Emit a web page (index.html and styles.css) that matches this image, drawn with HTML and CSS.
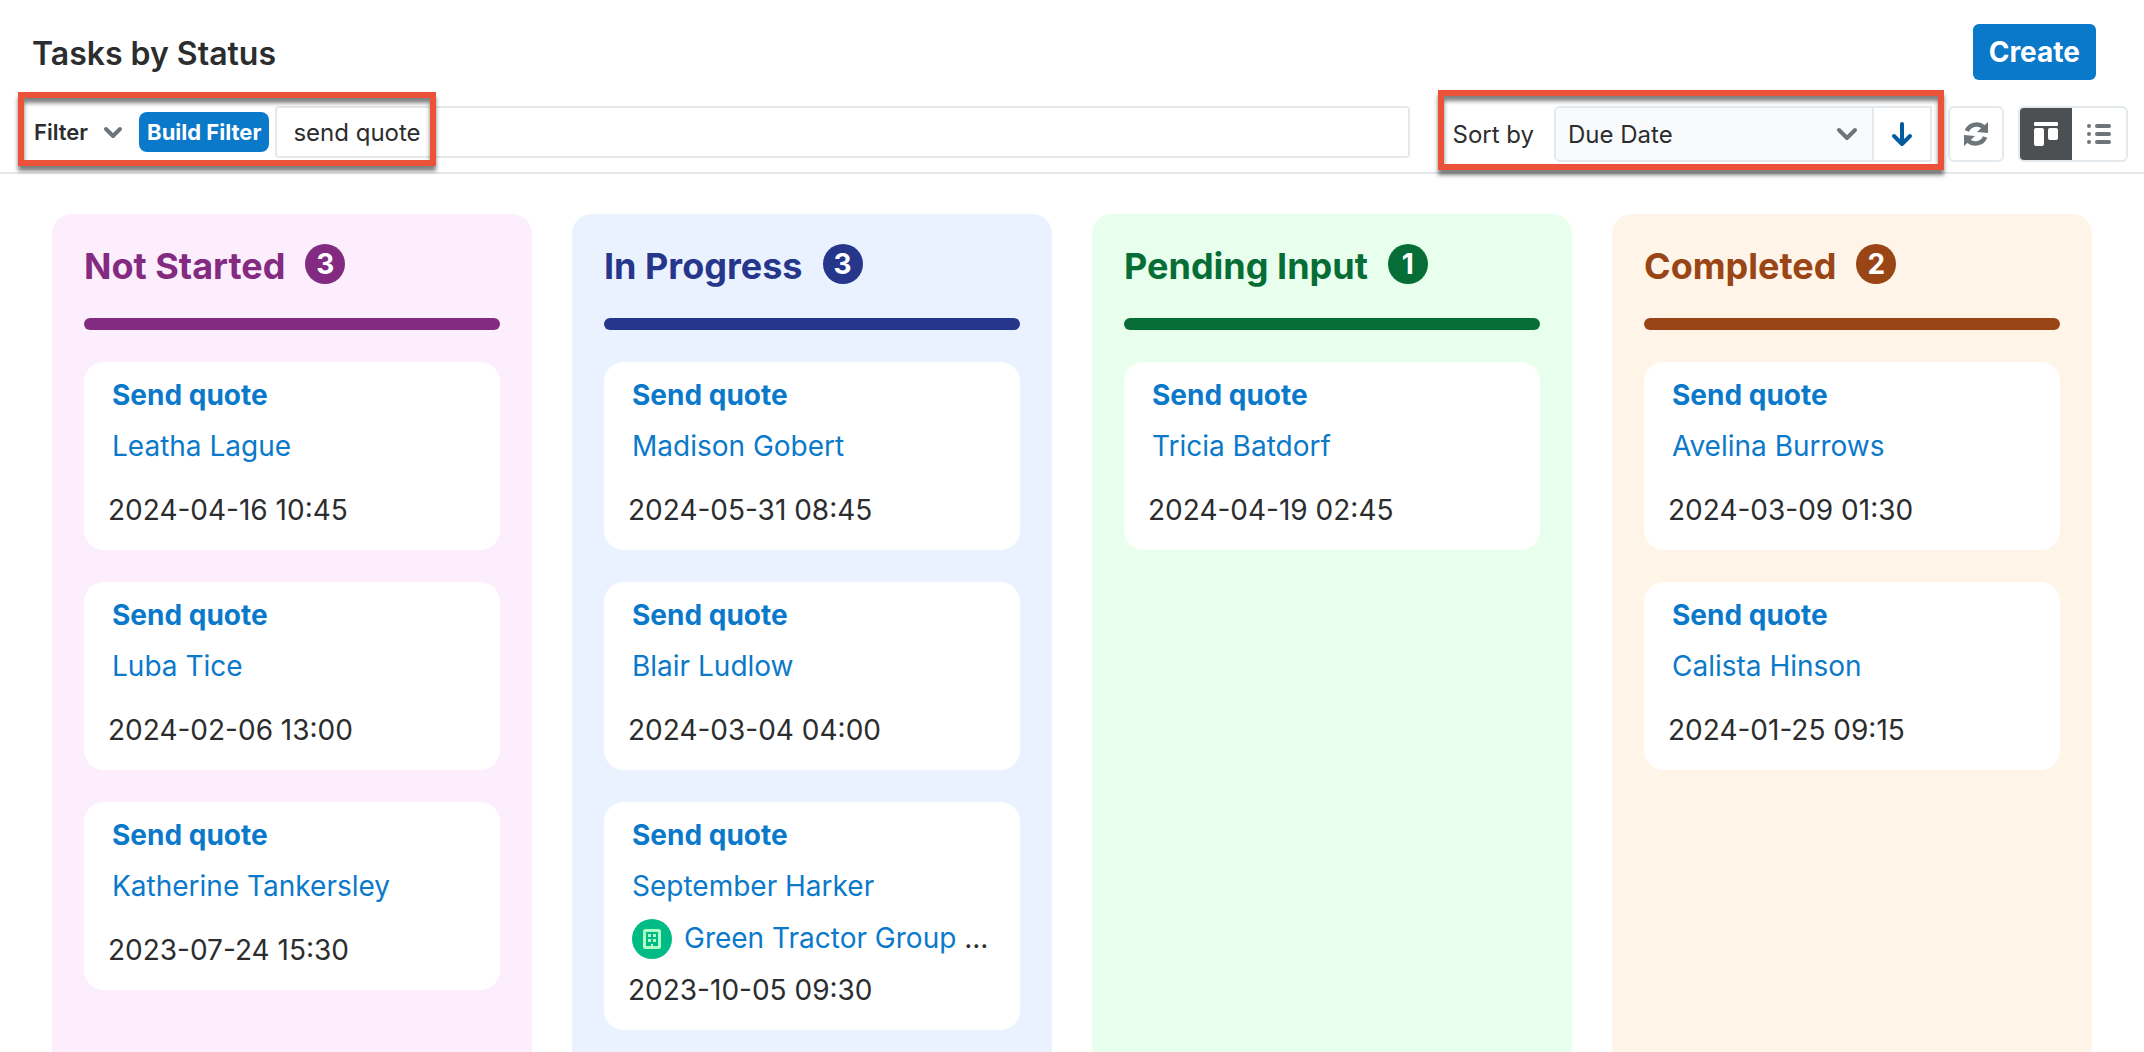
FILE: index.html
```html
<!DOCTYPE html>
<html lang="en">
<head>
  <meta charset="utf-8">
  <title>Tasks by Status</title>
  <link rel="stylesheet" href="styles.css">
</head>
<body>

<header class="page-header">
  <h1>Tasks by Status</h1>
  <button type="button" class="create-btn">Create</button>
</header>

<div class="toolbar">
  <form class="filter">
    <button type="button" class="filter-menu">Filter
      <svg width="22" height="14" viewBox="0 0 22 14"><path d="M4 4l7 7 7-7" fill="none" stroke="#6b757a" stroke-width="4" stroke-linecap="round" stroke-linejoin="round"/></svg>
    </button>
    <button type="button" class="build-btn">Build Filter</button>
    <input type="text" class="search" aria-label="Filter text" value="send quote">
  </form>

  <div class="sort">
    <label for="sort">Sort by</label>
    <div class="sort-group">
      <select id="sort">
        <option>Due Date</option>
        <option>Status</option>
      </select>
      <svg class="select-arrow" width="22" height="14" viewBox="0 0 22 14"><path d="M3 3l8 8 8-8" fill="none" stroke="#6b757a" stroke-width="4" stroke-linecap="round" stroke-linejoin="round"/></svg>
      <button type="button" class="direction" aria-label="Sort descending">
        <svg width="24" height="26" viewBox="0 0 24 26"><path d="M12 3v20M4 15l8 8 8-8" fill="none" stroke="#005c9e" stroke-width="4" stroke-linecap="round" stroke-linejoin="round"/></svg>
      </button>
    </div>
  </div>

  <button type="button" class="icon-btn refresh" aria-label="Refresh">
    <svg width="24" height="24" viewBox="0 0 24 24">
      <path d="M3 9A10 9 0 0 1 19.500 5M21 15A10 9 0 0 1 4.500 19" fill="none" stroke="#6b757a" stroke-width="4.500"/>
      <path d="M24 0v11L13 10zM0 24V13l11 1z" fill="#6b757a"/>
    </svg>
  </button>

  <div class="view-switch">
    <button type="button" class="active" aria-label="Board view">
      <svg width="24" height="24" viewBox="0 0 24 24" fill="#fff">
        <rect width="24" height="4" rx="1"/>
        <rect y="6" width="10" height="18" rx="2"/>
        <rect x="14" y="6" width="10" height="12" rx="2"/>
      </svg>
    </button>
    <button type="button" aria-label="List view">
      <svg width="24" height="20" viewBox="0 0 24 20" fill="#6b757a">
        <circle cx="2" cy="2" r="2"/><rect x="8" width="16" height="4" rx="2"/>
        <circle cx="2" cy="10" r="2"/><rect x="8" y="8" width="16" height="4" rx="2"/>
        <circle cx="2" cy="18" r="2"/><rect x="8" y="16" width="16" height="4" rx="2"/>
      </svg>
    </button>
  </div>
</div>

<main class="board">
  <section class="column not-started">
    <h2>Not Started <span class="count">3</span></h2>
    <div class="bar"></div>
    <article class="card">
      <a href="#" class="task">Send quote</a>
      <a href="#" class="person">Leatha Lague</a>
      <time>2024-04-16 10:45</time>
    </article>
    <article class="card">
      <a href="#" class="task">Send quote</a>
      <a href="#" class="person">Luba Tice</a>
      <time>2024-02-06 13:00</time>
    </article>
    <article class="card">
      <a href="#" class="task">Send quote</a>
      <a href="#" class="person">Katherine Tankersley</a>
      <time>2023-07-24 15:30</time>
    </article>
  </section>

  <section class="column in-progress">
    <h2>In Progress <span class="count">3</span></h2>
    <div class="bar"></div>
    <article class="card">
      <a href="#" class="task">Send quote</a>
      <a href="#" class="person">Madison Gobert</a>
      <time>2024-05-31 08:45</time>
    </article>
    <article class="card">
      <a href="#" class="task">Send quote</a>
      <a href="#" class="person">Blair Ludlow</a>
      <time>2024-03-04 04:00</time>
    </article>
    <article class="card">
      <a href="#" class="task">Send quote</a>
      <a href="#" class="person">September Harker</a>
      <div class="company">
        <svg width="40" height="40" viewBox="0 0 40 40">
          <circle cx="20" cy="20" r="20" fill="#00bb85"/>
          <rect x="12.500" y="11.500" width="15" height="17" rx="1" fill="none" stroke="#b0ffc4" stroke-width="3"/>
          <path d="M16 15h3v3h-3zM21 15h3v3h-3zM16 20h3v3h-3zM21 20h3v3h-3zM19 25h2v4h-2z" fill="#b0ffc4"/>
        </svg>
        <p><a href="#">Green Tractor Group</a> ...</p>
      </div>
      <time>2023-10-05 09:30</time>
    </article>
  </section>

  <section class="column pending">
    <h2>Pending Input <span class="count">1</span></h2>
    <div class="bar"></div>
    <article class="card">
      <a href="#" class="task">Send quote</a>
      <a href="#" class="person">Tricia Batdorf</a>
      <time>2024-04-19 02:45</time>
    </article>
  </section>

  <section class="column completed">
    <h2>Completed <span class="count">2</span></h2>
    <div class="bar"></div>
    <article class="card">
      <a href="#" class="task">Send quote</a>
      <a href="#" class="person">Avelina Burrows</a>
      <time>2024-03-09 01:30</time>
    </article>
    <article class="card">
      <a href="#" class="task">Send quote</a>
      <a href="#" class="person">Calista Hinson</a>
      <time>2024-01-25 09:15</time>
    </article>
  </section>
</main>

</body>
</html>
```
FILE: styles.css
```css
*, *::after {
  box-sizing: border-box;
}
body {
  margin: 0;
  min-height: 100vh;
  display: flex;
  flex-direction: column;
  font-family: Inter, sans-serif;
  font-size: 28px;
  color: #2b2d2e;
  background: #fff;
}
h1, h2, p {
  margin: 0;
}
a {
  color: #0b79ca;
  text-decoration: none;
}
button, input, select {
  font-family: inherit;
  font-size: 24px;
  color: inherit;
  margin: 0;
}
button {
  display: flex;
  align-items: center;
  justify-content: center;
  padding: 0;
  border: 0;
  background: none;
}
svg {
  display: block;
  flex: none;
}

.page-header {
  display: flex;
  align-items: center;
  justify-content: space-between;
  padding: 24px 48px 0 32px;
}
h1 {
  padding-top: 2px;
  font-size: 32px;
  font-weight: 600;
}
.create-btn {
  height: 56px;
  padding: 0 16px;
  border-radius: 6px;
  background: #0b79ca;
  color: #fff;
  font-size: 28px;
  font-weight: 700;
}

.toolbar {
  display: flex;
  height: 94px;
  padding: 26px 16px 0 18px;
  border-bottom: 2px solid #e4e9ed;
}
.filter {
  position: relative;
  display: flex;
  align-items: center;
  flex: 1;
  height: 52px;
  padding-left: 16px;
}
.filter-menu {
  gap: 14px;
  font-size: 22px;
  font-weight: 600;
}
.build-btn {
  height: 40px;
  margin: 0 6px 0 15px;
  padding: 0 8px;
  border-radius: 8px;
  background: #0b79ca;
  color: #fff;
  font-size: 22px;
  font-weight: 700;
}
.search {
  flex: 1;
  height: 52px;
  padding: 0 16px;
  border: 2px solid #e4e9ed;
  border-radius: 4px;
  background: #fff;
}

/* red frames around the filter and the sort controls */
.filter::after, .sort::after {
  content: "";
  position: absolute;
  border: 6px solid #ec523a;
  box-shadow: 0 5px 4px rgba(0, 0, 0, 0.5), inset 0 5px 4px rgba(0, 0, 0, 0.5);
  pointer-events: none;
}
.filter::after {
  left: 0;
  top: -14px;
  width: 418px;
  height: 74px;
}
.sort::after {
  inset: -16px 0 -8px 0;
}

.sort {
  position: relative;
  display: flex;
  align-items: center;
  height: 56px;
  margin-left: 28px;
  padding: 0 12px 0 14px;
  font-size: 24px;
}
.sort-group {
  display: flex;
  align-items: center;
  height: 56px;
  margin-left: 20px;
  border: 2px solid #e4e9ed;
  border-radius: 6px 0 0 6px;
}
.sort-group select {
  appearance: none;
  width: 316px;
  height: 52px;
  padding: 0 48px 0 12px;
  border: 0;
  border-radius: 4px 0 0 4px;
  background: #f9fafc;
}
.select-arrow {
  margin-left: -36px;
  margin-right: 14px;
  pointer-events: none;
}
.direction {
  width: 58px;
  height: 52px;
  border-left: 2px solid #e4e9ed;
}
.icon-btn {
  width: 56px;
  height: 56px;
  border: 2px solid #e4e9ed;
  border-radius: 6px;
}
.refresh {
  margin: 0 14px 0 4px;
}
.view-switch {
  display: flex;
  height: 56px;
  border: 2px solid #e4e9ed;
  border-radius: 6px;
  overflow: hidden;
}
.view-switch button {
  width: 54px;
}
.view-switch .active {
  width: 52px;
  background: #4c5053;
}

.board {
  flex: 1;
  display: grid;
  grid-template-columns: repeat(4, 1fr);
  gap: 40px;
  padding: 40px 52px 0;
}
.column {
  padding: 28px 32px 22px;
  border-radius: 20px 20px 0 0;
}
.column h2 {
  display: flex;
  align-items: flex-start;
  gap: 20px;
  font-size: 36px;
  line-height: 48px;
  font-weight: 700;
}
.count {
  width: 40px;
  height: 40px;
  margin-top: 2px;
  border-radius: 50%;
  color: #fff;
  font-size: 28px;
  line-height: 40px;
  text-align: center;
}
.bar {
  height: 12px;
  margin-top: 28px;
  border-radius: 6px;
}
.card {
  display: flex;
  flex-direction: column;
  margin-top: 32px;
  padding: 8px 24px 14px;
  border-radius: 20px;
  background: #fff;
  line-height: 51px;
}
.task, .person, .company {
  margin-left: 4px;
}
.task {
  font-weight: 700;
}
.card time {
  margin-top: 13px;
}
.company {
  display: flex;
  align-items: center;
  gap: 12px;
  height: 53px;
}
.company + time {
  margin-top: 0;
}

.not-started {
  background: #fceefd;
}
.not-started h2 {
  color: #832a81;
}
.not-started .count, .not-started .bar {
  background: #832a81;
}
.in-progress {
  background: #ebf2ff;
}
.in-progress h2 {
  color: #26368b;
}
.in-progress .count, .in-progress .bar {
  background: #26368b;
}
.pending {
  background: #e7ffec;
}
.pending h2 {
  color: #076d36;
}
.pending .count, .pending .bar {
  background: #076d36;
}
.completed {
  background: #fff4e8;
}
.completed h2 {
  color: #994516;
}
.completed .count, .completed .bar {
  background: #994516;
}
```
